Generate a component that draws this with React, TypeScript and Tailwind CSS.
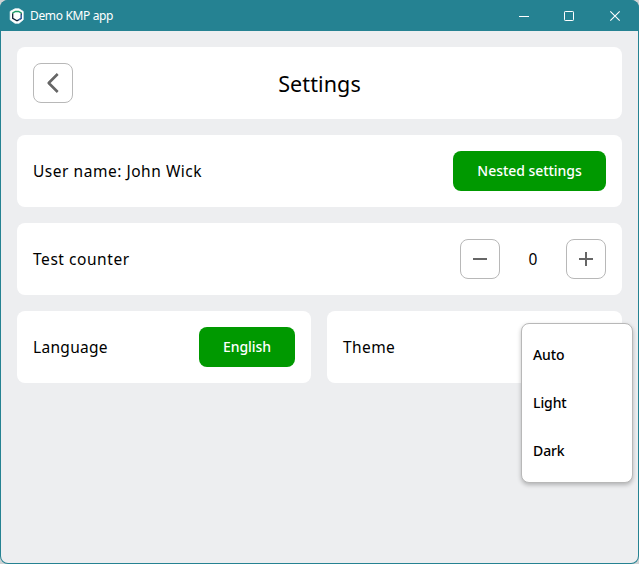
import type { ReactNode } from "react";

const card = "flex h-[72px] items-center rounded-lg bg-white px-4";
const label = "text-[15.5px] leading-6 whitespace-nowrap";

function Primary({ children, className }: { children: ReactNode; className: string }) {
  return (
    <button className={`flex h-10 items-center justify-center rounded-lg bg-[#009900] pb-0.5 text-[14px] font-medium tracking-[-0.05px] whitespace-nowrap text-white ${className}`}>
      {children}
    </button>
  );
}

function IconButton({ d, label: name, width = 2 }: { d: string; label: string; width?: number }) {
  return (
    <button aria-label={name} className="flex size-10 items-center justify-center rounded-lg border border-[#b8b8b8] bg-white">
      <svg className="size-6 shrink-0" viewBox="0 0 24 24" fill="none" stroke="#666666" strokeWidth={width} strokeLinejoin="round">
        <path d={d} />
      </svg>
    </button>
  );
}

function TitleBar() {
  return (
    <header className="flex h-[31px] shrink-0 items-center bg-[#258292] text-white">
      <svg className="ml-[9px] size-4 shrink-0" viewBox="0 0 16 16" fill="none">
        <path d="M6 .8h4L14.2 3.4v8.4L10 15.2H6L1.2 11.8V3.4Z" fill="#fff" stroke="#fff" strokeWidth=".8" strokeLinejoin="round" />
        <path d="M3.7 5.2v5.2L8 12.8l4.3-2.4V5.2" stroke="#102034" strokeWidth="1.3" />
        <path d="M3.4 5.2 6.5 3.5h3l3.1 1.7" stroke="#1f9d68" strokeWidth="1.4" />
        <path d="M12.3 6.5v3.9L9 12.3" stroke="#3c6cae" strokeWidth="1.2" />
      </svg>
      <span className="ml-[5px] text-[12px] tracking-[-0.35px]">Demo KMP app</span>
      <div className="ml-auto flex">
        <svg className="h-[30px] w-[46px]" viewBox="0 0 46 30" stroke="#fff" fill="none"><path d="M18 15.5h10" /></svg>
        <svg className="h-[30px] w-[46px]" viewBox="0 0 46 30" stroke="#fff" fill="none"><rect x="17.5" y="10.5" width="9" height="9" rx=".7" /></svg>
        <svg className="h-[30px] w-[46px]" viewBox="0 0 46 30" stroke="#fff" strokeWidth="1.1" fill="none"><path d="m17.3 10.3 9.4 9.4m0-9.4-9.4 9.4" /></svg>
      </div>
    </header>
  );
}

export default function App() {
  return (
    <div className="h-[564px] w-[639px] bg-[#cfd3d4] font-['Noto_Sans',sans-serif] text-black">
      <div className="flex h-full flex-col overflow-hidden rounded-lg bg-[#258292]">
        <TitleBar />
        <main className="mx-px mb-px flex grow flex-col gap-4 rounded-b-[7px] bg-[#edeef0] p-4">
          <section className={`${card} justify-between`}>
            <IconButton label="Back" d="M16.7 3 7.7 12l9 9" width={2.6} />
            <h1 className="pt-0.5 text-[21.5px] tracking-[0.1px]">Settings</h1>
            <div className="w-10" />
          </section>
          <section className={`${card} justify-between`}>
            <span className={`${label} tracking-[0.53px]`}>User name: John Wick</span>
            <Primary className="w-[153px]">Nested settings</Primary>
          </section>
          <section className={`${card} justify-between`}>
            <span className={`${label} tracking-[0.55px]`}>Test counter</span>
            <div className="flex items-center">
              <IconButton label="Decrease" d="M5 12h14" />
              <span className={`${label} w-[66px] text-center`}>0</span>
              <IconButton label="Increase" d="M5 12h14M12 5v14" />
            </div>
          </section>
          <div className="flex gap-4">
            <section className={`${card} w-[294px] justify-between`}>
              <span className={`${label} tracking-[0.3px]`}>Language</span>
              <Primary className="w-24">English</Primary>
            </section>
            <section className={`${card} relative w-[295px]`}>
              <span className={`${label} tracking-[0.4px]`}>Theme</span>
              <div className="absolute top-3 left-[194px] flex h-[160px] w-[112px] flex-col rounded-lg border border-[#b8b8b8] bg-white pt-[6px] pb-2 pl-[11px] text-[14px] font-medium tracking-[-0.1px] shadow-[0_2px_4px_rgba(0,0,0,0.25)]">
                <span className="flex h-12 items-center">Auto</span>
                <span className="flex h-12 items-center">Light</span>
                <span className="flex h-12 items-center">Dark</span>
              </div>
            </section>
          </div>
        </main>
      </div>
    </div>
  );
}
